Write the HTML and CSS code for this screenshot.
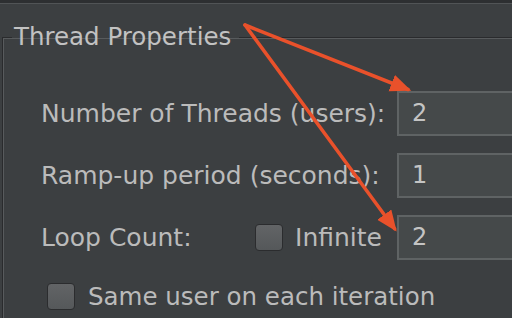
FILE: index.html
```html
<!DOCTYPE html>
<html lang="en">
<head>
    <meta charset="UTF-8">
    <title>Thread Group</title>
    <link rel="stylesheet" href="styles.css">
</head>
<body>
    <div class="top-bar"></div>
    <fieldset class="thread-props">
        <legend>Thread Properties</legend>
        <div class="props-grid">
            <label class="prop-label">Number of Threads (users):</label>
            <div class="text-field">2</div>

            <label class="prop-label">Ramp-up period (seconds):</label>
            <div class="text-field">1</div>

            <div class="prop-label loop-row">
                <span>Loop Count:</span>
                <span class="check-group">
                    <span class="checkbox"></span>
                    <span>Infinite</span>
                </span>
            </div>
            <div class="text-field">2</div>
        </div>
        <div class="same-user">
            <span class="checkbox"></span>
            <span>Same user on each iteration</span>
        </div>
    </fieldset>

    <!-- annotation arrows -->
    <svg class="arrows" width="512" height="318" viewBox="0 0 512 318">
        <defs>
            <marker id="head" markerWidth="7" markerHeight="6" refX="5" refY="2.5" orient="auto" markerUnits="strokeWidth">
                <path d="M0,0 L6,2.5 L0,5 z" fill="#e9512b"/>
            </marker>
        </defs>
        <line x1="245" y1="25" x2="408" y2="89.5" stroke="#e9512b" stroke-width="3.5" stroke-linecap="round" marker-end="url(#head)"/>
        <line x1="245" y1="25" x2="394.6" y2="228.8" stroke="#e9512b" stroke-width="3.5" stroke-linecap="round" marker-end="url(#head)"/>
    </svg>
</body>
</html>
```

FILE: styles.css
```css
/* Darcula-like thread group panel */
body {
    margin: 0;
    width: 512px;
    height: 318px;
    overflow: hidden;
    background-color: #3c3f41;
    color: #bbbbbb;
    font-family: 'DejaVu Sans', sans-serif;
    position: relative;
}

.top-bar {
    height: 3px;
    background-color: #2d2f31;
    border-bottom: 1px solid #515456;
}

.thread-props {
    margin: 17px 0 0 2px;
    padding: 0;
    width: 600px;
    height: 400px;
    border: none;
    border-top: 1px solid #2a2b2d;
    border-left: 1px solid #2a2b2d;
    box-shadow: inset 1px 1px 0 #585b5d;
}

.thread-props legend {
    margin-left: 9px;
    padding: 0 8px 0 2px;
    font-size: 24.5px;
    line-height: 32px;
    color: #c2c2c2;
}

.props-grid {
    display: grid;
    grid-template-columns: 356px 1fr;
    grid-auto-rows: 45px;
    row-gap: 17px;
    padding: 38px 0 0 38px;
    align-items: center;
}

.prop-label {
    font-size: 25px;
    white-space: nowrap;
}

.loop-row {
    display: flex;
    align-items: center;
}

.check-group {
    display: flex;
    align-items: center;
    gap: 12px;
    margin-left: auto;
    margin-right: 15px;
}

.checkbox {
    display: inline-block;
    flex: none;
    width: 26px;
    height: 25px;
    border: 1px solid #2b2c2e;
    border-radius: 4px;
    background: linear-gradient(#626466, #55585a);
}

.text-field {
    height: 45px;
    box-sizing: border-box;
    border: 2px solid #5f6364;
    background-color: #45494a;
    padding-left: 13px;
    font-size: 24px;
    line-height: 41px;
    color: #c4c4c4;
}

.same-user {
    display: flex;
    align-items: center;
    gap: 13px;
    padding: 22px 0 0 44px;
    font-size: 24.5px;
    white-space: nowrap;
}

.arrows {
    position: absolute;
    left: 0;
    top: 0;
}
```
